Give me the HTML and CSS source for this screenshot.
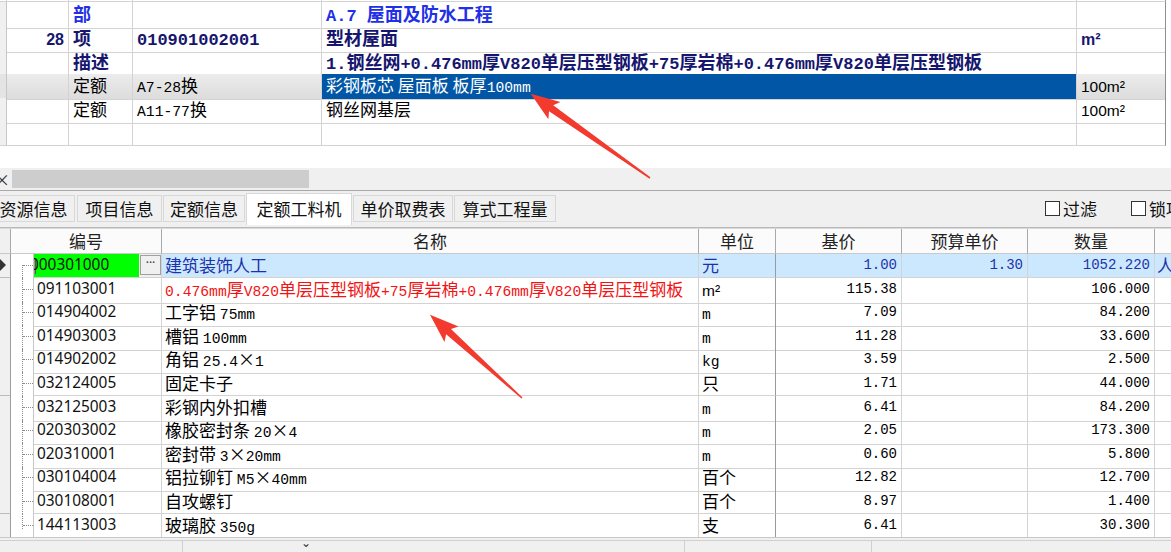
FILE: index.html
```html
<!DOCTYPE html>
<html lang="zh">
<head>
<meta charset="utf-8">
<link rel="stylesheet" href="styles.css">
</head>
<body>
<div class="top">
  <div class="tr thin"><div></div><div></div><div></div><div></div><div></div><div></div><div></div></div>
  <div class="tr"><div class="ind"></div><div></div><div class="b blue">部</div><div></div><div class="b blue"><span class="mb">A.7 </span>屋面及防水工程</div><div></div><div class="rest"></div></div>
  <div class="tr"><div class="ind"></div><div class="b navy r"><span class="sb">28</span></div><div class="b navy">项</div><div class="b navy"><span class="mb">010901002001</span></div><div class="b navy">型材屋面</div><div class="b navy"><span class="sb">m²</span></div><div class="rest"></div></div>
  <div class="tr"><div class="ind"></div><div></div><div class="b navy">描述</div><div></div><div class="b navy"><span class="mb">1.</span>钢丝网<span class="mb">+0.476mm</span>厚<span class="mb">V820</span>单层压型钢板<span class="mb">+75</span>厚岩棉<span class="mb">+0.476mm</span>厚<span class="mb">V820</span>单层压型钢板</div><div></div><div class="rest"></div></div>
  <div class="tr sel"><div class="ind"></div><div></div><div>定额</div><div><span class="m">A7-28</span>换</div><div class="hl">彩钢板芯 屋面板 板厚<span class="m">100mm</span></div><div><span class="s">100m²</span></div><div class="rest"></div></div>
  <div class="tr"><div class="ind"></div><div></div><div>定额</div><div><span class="m">A11-77</span>换</div><div>钢丝网基层</div><div><span class="s">100m²</span></div><div class="rest"></div></div>
  <div class="tr"><div class="ind"></div><div></div><div></div><div></div><div></div><div></div><div class="rest"></div></div>
</div>

<div class="sbar"><span class="sx">×</span><div class="thumb"></div></div>

<div class="tabbar">
  <div class="tab">资源信息</div>
  <div class="tab">项目信息</div>
  <div class="tab">定额信息</div>
  <div class="tab active">定额工料机</div>
  <div class="tab">单价取费表</div>
  <div class="tab">算式工程量</div>
  <div class="checks">
    <label class="chk"><span class="box"></span>过滤</label>
    <label class="chk"><span class="box"></span>锁项</label>
  </div>
</div>

<div class="grid">
  <div class="hr"><div class="ind"></div><div>编号</div><div>名称</div><div>单位</div><div>基价</div><div>预算单价</div><div>数量</div><div class="rest"></div></div>

  <div class="dr cur first"><div class="ind"><span class="tri"></span></div><div class="tree"></div><div class="code green"><span class="caret"></span><span class="ctext">000301000</span><span class="dots">···</span></div><div class="name bl">建筑装饰人工</div><div class="unit bl">元</div><div class="num bl">1.00</div><div class="num bl">1.30</div><div class="num bl">1052.220</div><div class="rest bl">人</div></div>
  <div class="dr"><div class="ind"></div><div class="tree"></div><div class="code">091103001</div><div class="name red"><span class="m">0.476mm</span>厚<span class="m">V820</span>单层压型钢板<span class="m">+75</span>厚岩棉<span class="m">+0.476mm</span>厚<span class="m">V820</span>单层压型钢板</div><div class="unit"><span class="s">m²</span></div><div class="num">115.38</div><div class="num"></div><div class="num">106.000</div><div class="rest"></div></div>
  <div class="dr"><div class="ind"></div><div class="tree"></div><div class="code">014904002</div><div class="name">工字铝 <span class="m">75mm</span></div><div class="unit"><span class="m">m</span></div><div class="num">7.09</div><div class="num"></div><div class="num">84.200</div><div class="rest"></div></div>
  <div class="dr"><div class="ind"></div><div class="tree"></div><div class="code">014903003</div><div class="name">槽铝 <span class="m">100mm</span></div><div class="unit"><span class="m">m</span></div><div class="num">11.28</div><div class="num"></div><div class="num">33.600</div><div class="rest"></div></div>
  <div class="dr"><div class="ind"></div><div class="tree"></div><div class="code">014902002</div><div class="name">角铝 <span class="m">25.4</span>×<span class="m">1</span></div><div class="unit"><span class="m">kg</span></div><div class="num">3.59</div><div class="num"></div><div class="num">2.500</div><div class="rest"></div></div>
  <div class="dr"><div class="ind"></div><div class="tree"></div><div class="code">032124005</div><div class="name">固定卡子</div><div class="unit">只</div><div class="num">1.71</div><div class="num"></div><div class="num">44.000</div><div class="rest"></div></div>
  <div class="dr"><div class="ind"></div><div class="tree"></div><div class="code">032125003</div><div class="name">彩钢内外扣槽</div><div class="unit"><span class="m">m</span></div><div class="num">6.41</div><div class="num"></div><div class="num">84.200</div><div class="rest"></div></div>
  <div class="dr"><div class="ind"></div><div class="tree"></div><div class="code">020303002</div><div class="name">橡胶密封条 <span class="m">20</span>×<span class="m">4</span></div><div class="unit"><span class="m">m</span></div><div class="num">2.05</div><div class="num"></div><div class="num">173.300</div><div class="rest"></div></div>
  <div class="dr"><div class="ind"></div><div class="tree"></div><div class="code">020310001</div><div class="name">密封带 <span class="m">3</span>×<span class="m">20mm</span></div><div class="unit"><span class="m">m</span></div><div class="num">0.60</div><div class="num"></div><div class="num">5.800</div><div class="rest"></div></div>
  <div class="dr"><div class="ind"></div><div class="tree"></div><div class="code">030104004</div><div class="name">铝拉铆钉 <span class="m">M5</span>×<span class="m">40mm</span></div><div class="unit">百个</div><div class="num">12.82</div><div class="num"></div><div class="num">12.700</div><div class="rest"></div></div>
  <div class="dr"><div class="ind"></div><div class="tree"></div><div class="code">030108001</div><div class="name">自攻螺钉</div><div class="unit">百个</div><div class="num">8.97</div><div class="num"></div><div class="num">1.400</div><div class="rest"></div></div>
  <div class="dr last"><div class="ind"></div><div class="tree"></div><div class="code">144113003</div><div class="name">玻璃胶 <span class="m">350g</span></div><div class="unit">支</div><div class="num">6.41</div><div class="num"></div><div class="num">30.300</div><div class="rest"></div></div>
</div>

<div class="foot"><div class="fa"></div><div class="fb"><span class="fmark">⌄</span></div><div class="fc"></div><div class="fd"></div></div>

<svg class="arrows" width="1171" height="552" viewBox="0 0 1171 552">
  <polygon transform="translate(650,178) rotate(-144.8)" points="0,-0.8 121,-3.6 117,-10.5 146,0 117,10.5 121,3.6 0,0.8" fill="#f23b2e"/>
  <polygon transform="translate(522,398) rotate(-137.9)" points="0,-0.8 99,-3.6 95,-10.5 124,0 95,10.5 99,3.6 0,0.8" fill="#f23b2e"/>
</svg>
</body>
</html>
```

FILE: styles.css
```css
* { box-sizing: border-box; }
html, body { margin: 0; padding: 0; }
body {
  width: 1171px;
  height: 552px;
  overflow: hidden;
  position: relative;
  background: #fff;
  color: #000;
  font-family: "Noto Sans CJK SC", "Noto Sans", sans-serif;
  font-size: 17px;
}

/* ---------- top grid ---------- */
.top { height: 168px; background: #fff; }
.tr {
  display: grid;
  grid-template-columns: 7px 62px 64px 189px 755px 89px 1fr;
  height: 24px;
}
.tr.thin { height: 2px; }
.tr > div {
  border-right: 1px solid #d3d3d3;
  border-bottom: 1px solid #d3d3d3;
  padding-left: 4px;
  line-height: 22px;
  white-space: nowrap;
}
.tr > div:nth-child(6) { border-right-color: #8e8e8e; }
.tr > .rest { border-right: none; border-bottom: none; }
.tr.thin > div:last-child { border: none; }
.tr > .ind { background: #f0f0f0; padding: 0; border-right-color: #c6c6c6; }
.tr .r { text-align: right; padding-right: 4px; }
.b { font-weight: 700; font-size: 18px; }
.blue { color: #1f30e6; }
.navy { color: #16166e; }
.mb { font-family: "Liberation Mono", monospace; font-weight: 700; font-size: 17px; }
.sb { font-family: "Liberation Sans", sans-serif; font-weight: 700; font-size: 16px; }
.m { font-family: "Liberation Mono", monospace; font-size: 14.7px; }
.s { font-family: "Liberation Sans", sans-serif; font-size: 15.5px; }
.tr.sel > div { background: linear-gradient(#ececec, #dcdcdc); }
.tr.sel > .ind { background: #e4e4e4; }
.tr.sel > .rest { background: #fff; }
.tr.sel > .hl { background: #0256a6; color: #fff; }

/* ---------- scrollbar ---------- */
.sbar {
  height: 23px;
  background: #f0f0f0;
  border-bottom: 1px solid #a9a9a9;
  display: flex;
  align-items: center;
  position: relative;
  overflow: hidden;
}
.sx { position: absolute; left: -6px; top: 0; font-size: 16px; color: #333; line-height: 22px; }
.thumb { margin-left: 12px; width: 297px; height: 18px; background: #cdcdcd; }

/* ---------- tabs ---------- */
.tabbar {
  height: 37px;
  background: #f0f0f0;
  display: flex;
  align-items: flex-start;
  border-bottom: 1px solid #b9b9b9;
  position: relative;
  overflow: hidden;
}
.tab {
  flex: none;
  margin-top: 4px;
  height: 27px;
  line-height: 25px;
  border: 1px solid #d8d8d8;
  background: #f0f0f0;
  text-align: center;
  color: #111;
  margin-right: 1px;
  white-space: nowrap;
}
.tab:nth-child(1) { width: 83px; margin-left: -8px; margin-right: 2px; }
.tab:nth-child(2) { width: 85px; }
.tab:nth-child(3) { width: 82px; }
.tab:nth-child(4) { width: 106px; }
.tab:nth-child(5) { width: 100px; }
.tab:nth-child(6) { width: 102px; }
.tab.active {
  background: #fff;
  margin-top: 2px;
  height: 32px;
  border-bottom: none;
  line-height: 29px;
}
.checks { flex: none; margin-left: 488px; display: flex; margin-top: 5px; }
.chk { display: flex; align-items: center; height: 24px; margin-left: 34px; color: #111; white-space: nowrap; }
.chk:first-child { margin-left: 0; }
.box { width: 15px; height: 15px; border: 1px solid #333; background: #fff; margin-right: 3px; }

/* ---------- bottom grid ---------- */
.grid { border-top: 1px solid #dadada; background: #fff; }
.hr {
  display: grid;
  grid-template-columns: 11px 151px 537px 77px 126px 126px 127px 1fr;
  height: 25px;
  background: #fbfbfb;
}
.hr > div {
  border-right: 1px solid #a9a9a9;
  border-bottom: 1px solid #c9c9c9;
  text-align: center;
  line-height: 23px;
  color: #222;
}
.hr > .ind { background: #f0f0f0; }
.hr > .rest { border-right: none; }
.dr {
  display: grid;
  grid-template-columns: 11px 23px 128px 537px 77px 126px 126px 127px 1fr;
  height: 23.6px;
}
.dr > div {
  border-right: 1px solid #d3d3d3;
  border-bottom: 1px solid #d3d3d3;
  white-space: nowrap;
  line-height: 22px;
}
.dr > div:nth-child(5) { border-right-color: #9a9a9a; }
.dr > .rest { border-right: none; padding-left: 2px; }
.dr > .ind { background: #f0f0f0; border-right-color: #9d9d9d; border-bottom-color: #bdbdbd; position: relative; }
.dr > .tree { border-right-color: #c8c8c8; border-bottom: none; position: relative; }
.tree::before {
  content: "";
  position: absolute;
  left: 11px; top: 0; bottom: 0;
  border-left: 1px dotted #8a8a8a;
}
.tree::after {
  content: "";
  position: absolute;
  left: 12px; right: 0; top: 11px;
  border-top: 1px dotted #8a8a8a;
}
.first .tree::before { top: 11px; }
.last .tree::before { bottom: 11px; }
.tri {
  position: absolute; left: 0; top: 5px;
  width: 0; height: 0;
  border-top: 6px solid transparent;
  border-bottom: 6px solid transparent;
  border-left: 6px solid #333;
}
.code {
  padding-left: 3px;
  font-family: "Noto Sans", sans-serif;
  font-size: 15.4px;
  color: #111;
}
.code.green {
  background: linear-gradient(90deg, #00ff00 0, #00ff00 105px, #f0f0f0 105px);
  padding-left: 1px;
  position: relative;
  display: flex;
  overflow: hidden;
}
.caret { width: 1px; height: 16px; background: #d000d0; margin-top: 4px; flex: none; }
.ctext { margin-left: -6px; width: 103px; flex: none; overflow: hidden; }
.dots {
  position: absolute; left: 106px; top: 1px;
  width: 21px; height: 20px;
  border: 1px solid #a0a0a0;
  background: #f0f0f0;
  font-size: 12px; line-height: 14px;
  text-align: center;
  color: #333;
}
.name { padding-left: 3px; }
.unit { padding-left: 3px; }
.num {
  text-align: right;
  padding-right: 4px;
  font-family: "Liberation Mono", monospace;
  font-size: 14px;
}
.red { color: #f21313; }
.cur > div:not(.ind):not(.tree):not(.code) { background: #cce8ff; }
.bl { color: #1b32a8; }

/* ---------- footer ---------- */
.foot {
  position: absolute;
  left: 0; right: 0; top: 537px; bottom: 0;
  border-top: 1px solid #c8c8c8;
  background: #f0f0f0;
  display: flex;
  padding-top: 2px;
}
.foot > div { border-top: 1px solid #d0d0d0; height: 100%; border-right: 1px solid #d0d0d0; }
.fa { width: 183px; }
.fb { width: 502px; position: relative; }
.fc { width: 187px; }
.fd { flex: 1; border-right: none !important; }
.fmark { position: absolute; left: 118px; top: -8px; font-size: 12px; color: #333; }

/* ---------- annotations ---------- */
.arrows { position: absolute; left: 0; top: 0; pointer-events: none; }
```
